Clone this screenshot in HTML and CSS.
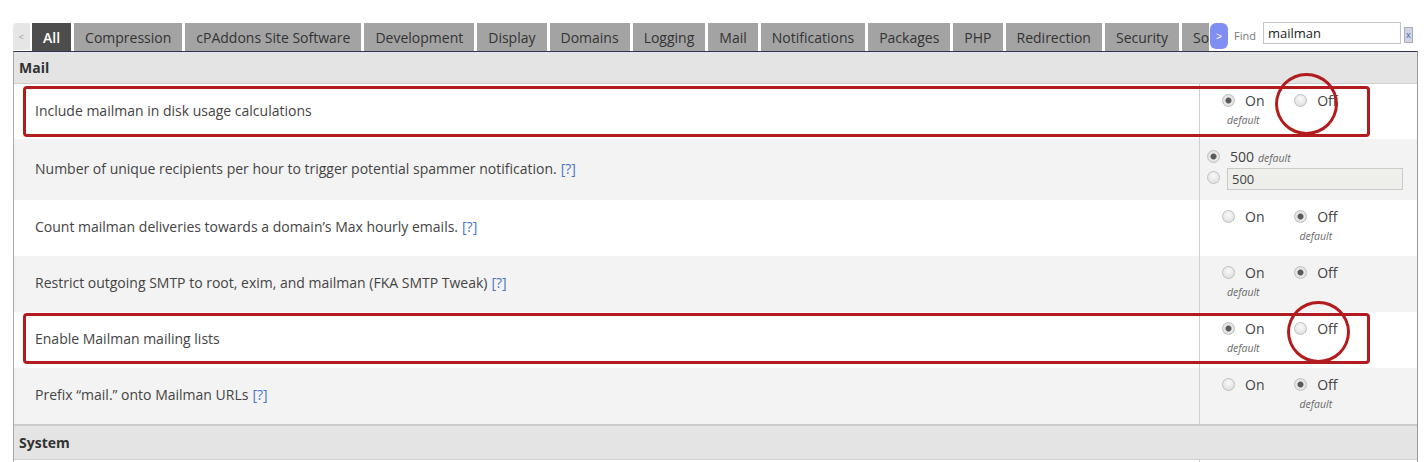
FILE: index.html
```html
<!DOCTYPE html>
<html lang="en">

<head>
    <meta charset="UTF-8">
    <meta name="viewport" content="width=device-width, initial-scale=1.0">
    <title>Tweak Settings</title>
    <link rel="stylesheet" href="styles.css">
</head>

<body>
    <div class="toolbar">
        <button class="scroll-left">&lt;</button>
        <div class="tabs">
            <a class="tab active">All</a>
            <a class="tab">Compression</a>
            <a class="tab">cPAddons Site Software</a>
            <a class="tab">Development</a>
            <a class="tab">Display</a>
            <a class="tab">Domains</a>
            <a class="tab">Logging</a>
            <a class="tab">Mail</a>
            <a class="tab">Notifications</a>
            <a class="tab">Packages</a>
            <a class="tab">PHP</a>
            <a class="tab">Redirection</a>
            <a class="tab">Security</a>
            <a class="tab last">So</a>
        </div>
        <button class="scroll-right">&gt;</button>
        <label class="find-label" for="find">Find</label>
        <input type="text" id="find" class="find-box" value="mailman">
        <span class="find-clear">x</span>
    </div>

    <div class="settings">
        <div class="section-head">Mail</div>

        <div class="row first">
            <div class="label">Include mailman in disk usage calculations</div>
            <div class="control">
                <label class="option"><span class="line"><input type="radio" class="radio" name="r1" checked>On</span><em>default</em></label>
                <label class="option"><span class="line"><input type="radio" class="radio" name="r1">Off</span></label>
            </div>
        </div>

        <div class="row alt tall">
            <div class="label">Number of unique recipients per hour to trigger potential spammer notification. <a class="help">[?]</a></div>
            <div class="control narrow">
                <div class="line"><input type="radio" class="radio" name="r2" checked>500 <em class="inline">default</em></div>
                <div class="line"><input type="radio" class="radio custom" name="r2"><input type="text" class="value-box" value="500"></div>
            </div>
        </div>

        <div class="row">
            <div class="label">Count mailman deliveries towards a domain’s Max hourly emails. <a class="help">[?]</a></div>
            <div class="control">
                <label class="option"><span class="line"><input type="radio" class="radio" name="r3">On</span></label>
                <label class="option"><span class="line"><input type="radio" class="radio" name="r3" checked>Off</span><em>default</em></label>
            </div>
        </div>

        <div class="row alt">
            <div class="label">Restrict outgoing SMTP to root, exim, and mailman (FKA SMTP Tweak) <a class="help">[?]</a></div>
            <div class="control">
                <label class="option"><span class="line"><input type="radio" class="radio" name="r4">On</span><em>default</em></label>
                <label class="option"><span class="line"><input type="radio" class="radio" name="r4" checked>Off</span></label>
            </div>
        </div>

        <div class="row">
            <div class="label">Enable Mailman mailing lists</div>
            <div class="control">
                <label class="option"><span class="line"><input type="radio" class="radio" name="r5" checked>On</span><em>default</em></label>
                <label class="option"><span class="line"><input type="radio" class="radio" name="r5">Off</span></label>
            </div>
        </div>

        <div class="row alt">
            <div class="label">Prefix “mail.” onto Mailman URLs <a class="help">[?]</a></div>
            <div class="control">
                <label class="option"><span class="line"><input type="radio" class="radio" name="r6">On</span></label>
                <label class="option"><span class="line"><input type="radio" class="radio" name="r6" checked>Off</span><em>default</em></label>
            </div>
        </div>

        <div class="section-head system">System</div>

        <div class="row">
            <div class="label"></div>
            <div class="control"></div>
        </div>
    </div>

    <!-- red highlight annotations -->
    <div class="mark box" style="top: 86px;"></div>
    <div class="mark ring" style="left: 1275px; top: 73px;"></div>
    <div class="mark box" style="top: 313px;"></div>
    <div class="mark ring" style="left: 1287px; top: 301px;"></div>
</body>

</html>
```

FILE: styles.css
```css
body {
    font-family: "Open Sans", Arial, sans-serif;
    font-size: 14px;
    color: #444;
    background-color: #fff;
    margin: 0;
    padding: 23px 7px 0 13px;
    overflow: hidden;
}

.toolbar {
    display: flex;
    align-items: flex-start;
    height: 28px;
}

.scroll-left {
    width: 17px;
    height: 27px;
    margin-right: 2px;
    padding: 0;
    border: none;
    border-radius: 4px 0 0 0;
    background-color: #e6e6e6;
    color: #aaa;
    font-size: 9px;
}

.tabs {
    display: flex;
    gap: 3px;
    width: 1178px;
    overflow: hidden;
    flex-shrink: 0;
}

.tab {
    flex-shrink: 0;
    height: 28px;
    line-height: 29px;
    padding: 0 11px;
    background-color: #a3a3a3;
    color: #333;
    white-space: nowrap;
}

.tab.active {
    background-color: #4d4d4d;
    color: #fff;
    font-weight: 600;
}

.tab.last {
    padding-right: 0;
}

.scroll-right {
    width: 18px;
    height: 26px;
    padding: 0;
    border: none;
    border-radius: 6px;
    background-color: #7e8ef3;
    color: #fff;
    font-size: 10px;
}

.find-label {
    margin: 5px 7px 0 6px;
    font-size: 11px;
    color: #777;
}

.find-box {
    width: 128px;
    height: 20px;
    margin-top: -1px;
    padding: 0 4px;
    border: 1px solid #c4c4c4;
    font-family: inherit;
    font-size: 13px;
    color: #222;
}

.find-clear {
    width: 7px;
    height: 14px;
    margin: 4px 0 0 3px;
    border: 1px solid #aab;
    background-color: #cdd5e2;
    color: #4767b3;
    font-size: 9px;
    line-height: 13px;
    text-align: center;
}

.settings {
    border-top: 1px solid #30344f;
    border-left: 1px solid #aaa;
    border-right: 1px solid #999;
}

.section-head {
    height: 31px;
    line-height: 31px;
    padding-left: 5px;
    background-color: #e4e4e4;
    border-bottom: 1px solid #cfcfcf;
    font-weight: bold;
    color: #333;
}

.section-head.system {
    height: 33px;
    line-height: 33px;
    border-top: 2px solid #cbcbcb;
}

.row {
    display: flex;
    min-height: 56px;
    background-color: #fff;
}

.row.first {
    min-height: 55px;
}

.row.alt {
    background-color: #f3f3f3;
}

.row.tall {
    min-height: 61px;
}

.label {
    flex: 1;
    display: flex;
    align-items: center;
    padding-left: 21px;
    padding-bottom: 3px;
}

.help {
    margin-left: 4px;
    color: #4a76c4;
}

.control {
    box-sizing: border-box;
    width: 218px;
    padding: 8px 0 0 22px;
    border-left: 1px solid #cfcfcf;
}

.control.narrow {
    padding: 7px 0 0 7px;
}

.option {
    display: inline-flex;
    flex-direction: column;
    align-items: center;
    vertical-align: top;
    margin-right: 26px;
}

.line {
    display: flex;
    align-items: center;
    height: 17px;
}

.narrow .line {
    height: 21px;
}

.option em,
.inline {
    font-size: 10.5px;
    color: #6a6a6a;
    margin-top: 4px;
}

.inline {
    margin: 3px 0 0 4px;
}

.radio {
    appearance: none;
    width: 13px;
    height: 13px;
    margin: 0 10px 0 0;
    border: 1px solid #c0c0c0;
    border-radius: 50%;
    background: radial-gradient(circle at 50% 35%, #fafafa 0, #d9d9d9 100%);
}

.radio:checked {
    background: radial-gradient(circle, #5a5a5a 0 2.5px, #eaeaea 3.5px, #d5d5d5 100%);
}

.radio.custom {
    margin-right: 7px;
}

.value-box {
    width: 176px;
    height: 22px;
    margin-top: 3px;
    padding: 0 4px;
    box-sizing: border-box;
    border: 1px solid #cacaca;
    background-color: #eeeeea;
    font-family: inherit;
    font-size: 13px;
    color: #444;
}

.mark {
    position: absolute;
    border: 3px solid #b31c1f;
    box-sizing: border-box;
}

.mark.box {
    left: 23px;
    width: 1347px;
    height: 51px;
    border-radius: 4px;
}

.mark.ring {
    width: 63px;
    height: 62px;
    border-radius: 50%;
}
```
